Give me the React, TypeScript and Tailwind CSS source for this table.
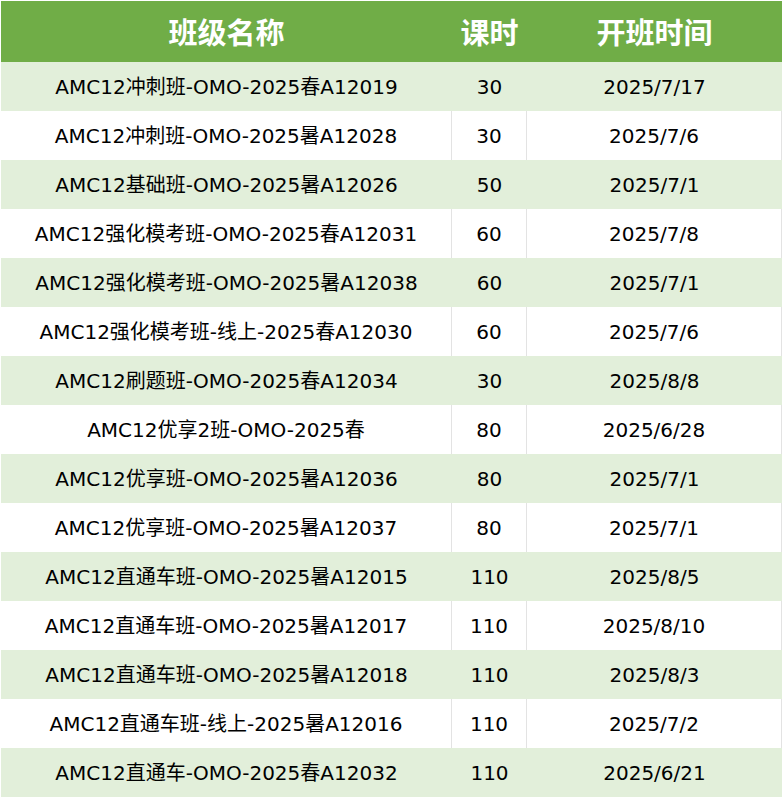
const rows: [string, string, string][] = [
  ['AMC12冲刺班-OMO-2025春A12019', '30', '2025/7/17'],
  ['AMC12冲刺班-OMO-2025暑A12028', '30', '2025/7/6'],
  ['AMC12基础班-OMO-2025暑A12026', '50', '2025/7/1'],
  ['AMC12强化模考班-OMO-2025春A12031', '60', '2025/7/8'],
  ['AMC12强化模考班-OMO-2025暑A12038', '60', '2025/7/1'],
  ['AMC12强化模考班-线上-2025春A12030', '60', '2025/7/6'],
  ['AMC12刷题班-OMO-2025春A12034', '30', '2025/8/8'],
  ['AMC12优享2班-OMO-2025春', '80', '2025/6/28'],
  ['AMC12优享班-OMO-2025暑A12036', '80', '2025/7/1'],
  ['AMC12优享班-OMO-2025暑A12037', '80', '2025/7/1'],
  ['AMC12直通车班-OMO-2025暑A12015', '110', '2025/8/5'],
  ['AMC12直通车班-OMO-2025暑A12017', '110', '2025/8/10'],
  ['AMC12直通车班-OMO-2025暑A12018', '110', '2025/8/3'],
  ['AMC12直通车班-线上-2025暑A12016', '110', '2025/7/2'],
  ['AMC12直通车-OMO-2025春A12032', '110', '2025/6/21'],
];

export default function App() {
  return (
    <div className="w-[782px] h-[799px] bg-white pt-px pl-px">
      <div className="w-[781px]">
        {/* 表头 */}
        <div
          className="grid grid-cols-[451px_75px_1fr] h-[61px] bg-[#70ad47] text-white text-[29px] font-bold"
          style={{ fontFamily: '"Noto Sans CJK SC", sans-serif' }}
        >
          <div className="flex items-center justify-center">班级名称</div>
          <div className="flex items-center justify-center">课时</div>
          <div className="flex items-center justify-center">开班时间</div>
        </div>
        {rows.map((r, i) => {
          const odd = i % 2 === 0;
          const cell = odd
            ? 'flex items-center justify-center'
            : 'flex items-center justify-center border-r border-[#e3e3e3]';
          return (
            <div
              key={i}
              className={
                odd
                  ? 'grid grid-cols-[451px_75px_1fr] h-[49px] bg-[#e2efda] text-black text-[20px]'
                  : 'grid grid-cols-[451px_75px_1fr] h-[49px] bg-white text-black text-[20px]'
              }
              style={{ fontFamily: '"DejaVu Sans", "Noto Sans CJK SC", sans-serif' }}
            >
              <div className={cell}>{r[0]}</div>
              <div className={cell}>{r[1]}</div>
              <div className={cell}>{r[2]}</div>
            </div>
          );
        })}
      </div>
    </div>
  );
}
